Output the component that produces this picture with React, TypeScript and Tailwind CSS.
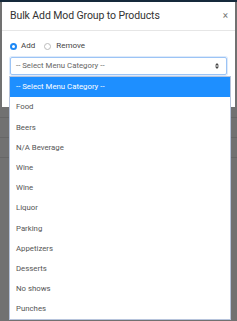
import React from "react";

const items = [
  "Food",
  "Beers",
  "N/A Beverage",
  "Wine",
  "Wine",
  "Liquor",
  "Parking",
  "Appetizers",
  "Desserts",
  "No shows",
  "Punches",
];

export default function App() {
  return (
    <div
      className="relative w-[237px] h-[321px] overflow-hidden bg-[#717171]"
      style={{ fontFamily: "Roboto, 'Liberation Sans', sans-serif" }}
    >
      <div className="h-[2px] bg-[#15293b]" />
      <div className="ml-[2px] w-[233px] h-[105px] bg-white">
        <div className="h-[29px] flex items-center justify-between pl-[8px] pr-[7px] border-b border-[#e6e6e6]">
          <span className="text-[10.5px] text-[#333] tracking-[-0.1px]">Bulk Add Mod Group to Products</span>
          <span className="text-[10px] leading-none text-[#777]">×</span>
        </div>
        <div className="px-[8px] pt-[10px]">
          <div className="flex items-center h-[10px] text-[8px] text-[#444]">
            <span className="w-[7px] h-[7px] rounded-full border-[2px] border-[#1e88f5] bg-white" />
            <span className="ml-[4px]">Add</span>
            <span className="ml-[9px] w-[7px] h-[7px] rounded-full border border-[#bbb] bg-white" />
            <span className="ml-[5px]">Remove</span>
          </div>
          <div className="mt-[6px] h-[18px] border border-[#9cc4f5] rounded-[2px] flex items-center justify-between pl-[5px] pr-[7px] shadow-[0_0_0_1px_rgba(120,170,240,0.25)]">
            <span className="text-[7.8px] text-[#666]">-- Select Menu Category --</span>
            <svg width="4" height="6" viewBox="0 0 4 6">
              <path d="M2 0 L4 2.4 L0 2.4 Z" fill="#444" />
              <path d="M2 6 L4 3.6 L0 3.6 Z" fill="#444" />
            </svg>
          </div>
        </div>
      </div>
      <div className="mt-[10px] border-t border-[#666]" />
      <div className="mt-[19px] border-t border-[#666]" />
      <div className="mt-[19px] border-t border-[#666]" />

      <div className="absolute left-[9px] top-[76px] w-[222px] border border-[#b7c4dc] bg-white">
        <div className="h-[20.2px] flex items-center pl-[6px] bg-[#1e8fff] text-white text-[7.8px]">
          -- Select Menu Category --
        </div>
        {items.map((it, i) => (
          <div key={i} className="h-[20.2px] flex items-center pl-[6px] text-[7.8px] text-[#555]">
            {it}
          </div>
        ))}
      </div>
    </div>
  );
}
